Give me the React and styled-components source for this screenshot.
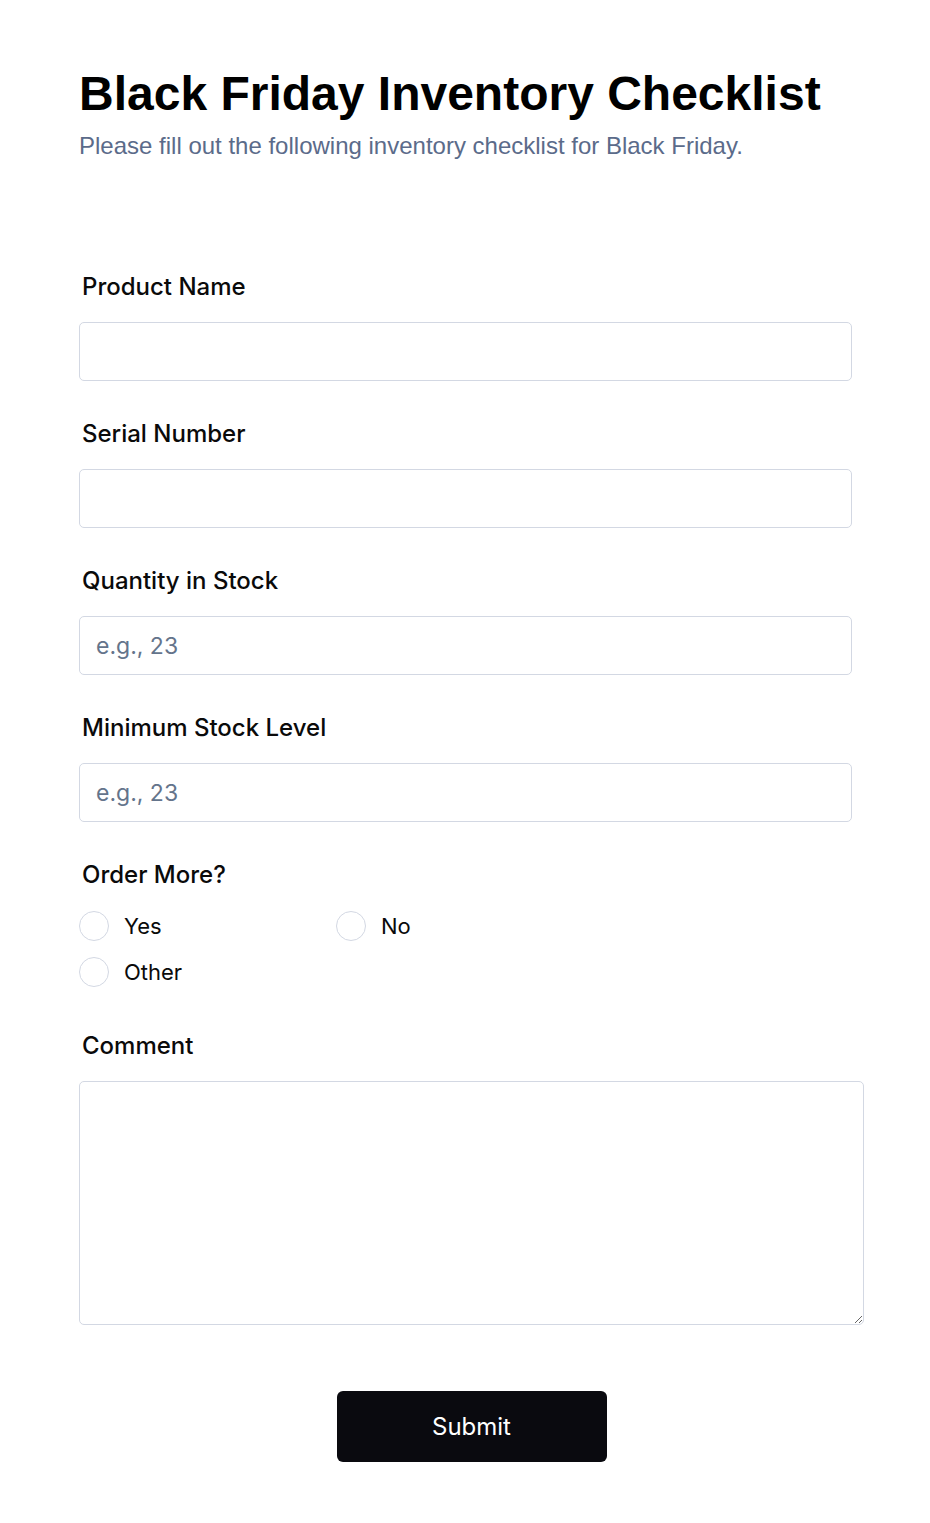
import React from 'react';
import styled, { createGlobalStyle } from 'styled-components';

const Global = createGlobalStyle`
  body {
    margin: 0;
    background: #fff;
    font-family: Inter, "Noto Sans", sans-serif;
  }
`

const fields = [
  { label: 'Product Name', placeholder: '' },
  { label: 'Serial Number', placeholder: '' },
  { label: 'Quantity in Stock', placeholder: 'e.g., 23' },
  { label: 'Minimum Stock Level', placeholder: 'e.g., 23' },
]

const options = ['Yes', 'No', 'Other']

export default function App() {
  return (
    <Page>
      <Global />
      <Title>Black Friday Inventory Checklist</Title>
      <Subtitle>Please fill out the following inventory checklist for Black Friday.</Subtitle>
      <Form>
        {fields.map(f => (
          <Field key={f.label}>
            <Label>{f.label}</Label>
            <Input placeholder={f.placeholder} />
          </Field>
        ))}
        <Field gap={44}>
          <Label>Order More?</Label>
          <Options>
            {options.map(o => (
              <Option key={o}>
                <Radio type="radio" name="order" />
                {o}
              </Option>
            ))}
          </Options>
        </Field>
        <Field>
          <Label>Comment</Label>
          <TextArea />
        </Field>
        <Actions>
          <Submit>Submit</Submit>
        </Actions>
      </Form>
    </Page>
  )
}

const Page = styled.div`
  padding: 66px 0 60px 79px;
`
const Title = styled.h1`
  margin: 0;
  font-family: "Liberation Sans", Arial, sans-serif;
  font-weight: 700;
  font-size: 48px;
  line-height: 56px;
  color: #000;
`
const Subtitle = styled.p`
  margin: 9px 0 0;
  font-family: "Liberation Sans", Arial, sans-serif;
  font-size: 24px;
  line-height: 30px;
  color: #5b6b8a;
`
const Form = styled.div`
  margin-top: 111px;
  width: 785px;
  display: flex;
  flex-direction: column;
`
const Field = styled.div`
  display: flex;
  flex-direction: column;
  margin-bottom: ${p => p.gap || 38}px;
`
const Label = styled.label`
  font-size: 24px;
  font-weight: 500;
  line-height: 30px;
  color: #0a0a0a;
  padding-left: 3px;
  margin-bottom: 20px;
`
const Input = styled.input`
  box-sizing: border-box;
  width: 773px;
  height: 59px;
  border: 1px solid #d3d8e3;
  border-radius: 5px;
  padding: 0 16px;
  font-family: Inter, sans-serif;
  font-size: 23px;
  color: #0a0a0a;
  outline: none;
  &::placeholder {
    color: #64748b;
  }
`
const Options = styled.div`
  display: grid;
  grid-template-columns: 257px 257px;
  row-gap: 16px;
  margin-top: 1px;
`
const Option = styled.label`
  display: flex;
  align-items: center;
  gap: 15px;
  font-size: 22px;
  line-height: 30px;
  color: #0a0a0a;
`
const Radio = styled.input`
  appearance: none;
  margin: 0;
  width: 30px;
  height: 30px;
  border: 1px solid #d3d8e3;
  border-radius: 50%;
  background: #fff;
`
const TextArea = styled.textarea`
  box-sizing: border-box;
  width: 785px;
  height: 244px;
  border: 1px solid #d3d8e3;
  border-radius: 5px;
  padding: 12px 16px;
  font-family: Inter, sans-serif;
  font-size: 22px;
  outline: none;
`
const Actions = styled.div`
  display: flex;
  justify-content: center;
  margin-top: 28px;
`
const Submit = styled.button`
  width: 270px;
  height: 71px;
  border: none;
  border-radius: 6px;
  background: #0a0a0f;
  color: #fff;
  font-family: Inter, sans-serif;
  font-size: 24px;
  cursor: pointer;
`
